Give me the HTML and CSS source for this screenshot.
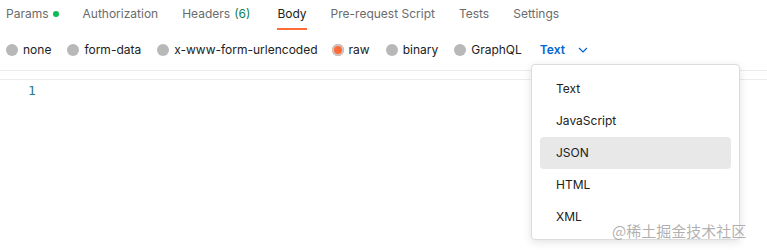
FILE: index.html
```html
<!DOCTYPE html>
<html>
<head>
<meta charset="utf-8">
<link rel="stylesheet" href="styles.css">
</head>
<body>
<div class="page">
  <nav class="tabs">
    <span class="tab">Params<span class="dot"></span></span>
    <span class="tab">Authorization</span>
    <span class="tab">Headers <span class="count">(6)</span></span>
    <span class="tab active">Body</span>
    <span class="tab">Pre-request Script</span>
    <span class="tab">Tests</span>
    <span class="tab">Settings</span>
  </nav>
  <div class="types">
    <span class="opt"><span class="radio"></span>none</span>
    <span class="opt"><span class="radio"></span>form-data</span>
    <span class="opt"><span class="radio"></span>x-www-form-urlencoded</span>
    <span class="opt"><span class="radio on"></span>raw</span>
    <span class="opt"><span class="radio"></span>binary</span>
    <span class="opt"><span class="radio"></span>GraphQL</span>
    <span class="lang">Text
      <svg class="chev" width="10" height="6" viewBox="0 0 10 6"><path d="M1 1l4 4 4-4" fill="none" stroke="#0265d2" stroke-width="1.2"/></svg>
    </span>
  </div>
  <div class="toolbar"></div>
  <div class="editor">
    <span class="ln">1</span>
  </div>
  <ul class="menu">
    <li>Text</li>
    <li>JavaScript</li>
    <li class="sel">JSON</li>
    <li>HTML</li>
    <li>XML</li>
  </ul>
  <div class="mark">@稀土掘金技术社区</div>
</div>
</body>
</html>
```
FILE: styles.css
```css
* { box-sizing: border-box; }
body { margin: 0; background: #fff; font-family: Inter, "Noto Sans", sans-serif; font-size: 12px; color: #212121; }
.page { position: relative; width: 767px; height: 250px; overflow: hidden; }
.tabs { display: flex; gap: 24px; padding: 0 0 0 6px; height: 30px; align-items: flex-start; }
.tab { display: flex; align-items: center; height: 30px; padding-bottom: 1px; color: #6b6b6b; border-bottom: 2px solid transparent; position: relative; }
.tab.active { color: #212121; border-bottom-color: #ff6c37; }
.dot { display: inline-block; width: 6px; height: 6px; border-radius: 50%; background: #0cbb52; margin-left: 4px; }
.count { color: #0f7f5a; margin-left: 4px; margin-right: 3px; }
.types { display: flex; align-items: center; height: 39px; padding-left: 6px; }
.opt { display: flex; align-items: center; gap: 5px; margin-right: 16px; color: #212121; }
.opt:nth-child(3) { margin-right: 14px; }
.radio { width: 12px; height: 12px; border-radius: 50%; background: #b8b8b8; display: inline-block; }
.radio.on { background: #ff6c37; box-shadow: inset 0 0 0 2px #c8c8c8; }
.lang { display: flex; align-items: center; color: #0265d2; font-weight: 600; margin-left: 2px; }
.chev { margin-left: 13px; }
.toolbar { height: 10px; border-top: 1px solid #ececec; border-bottom: 1px solid #ececec; margin-top: 1px; }
.editor { padding: 3px 0 0 28px; height: 30px; }
.ln { font-family: "DejaVu Sans Mono", monospace; font-size: 13px; color: #2a7b8c; }
.menu { position: absolute; left: 531px; top: 64px; width: 209px; height: 176px; margin: 0; padding: 8px 8px; list-style: none; background: #fff; border: 1px solid #dcdcdc; border-radius: 4px; box-shadow: 0 2px 8px rgba(0,0,0,0.12); }
.menu li { height: 32px; line-height: 32px; padding-left: 16px; color: #212121; border-radius: 4px; }
.menu li.sel { background: #e8e8e8; }
.mark { position: absolute; left: 612px; top: 220px; font-size: 15px; color: rgba(150,150,150,0.75); font-family: "Noto Sans CJK SC", sans-serif; letter-spacing: 0; }
```
